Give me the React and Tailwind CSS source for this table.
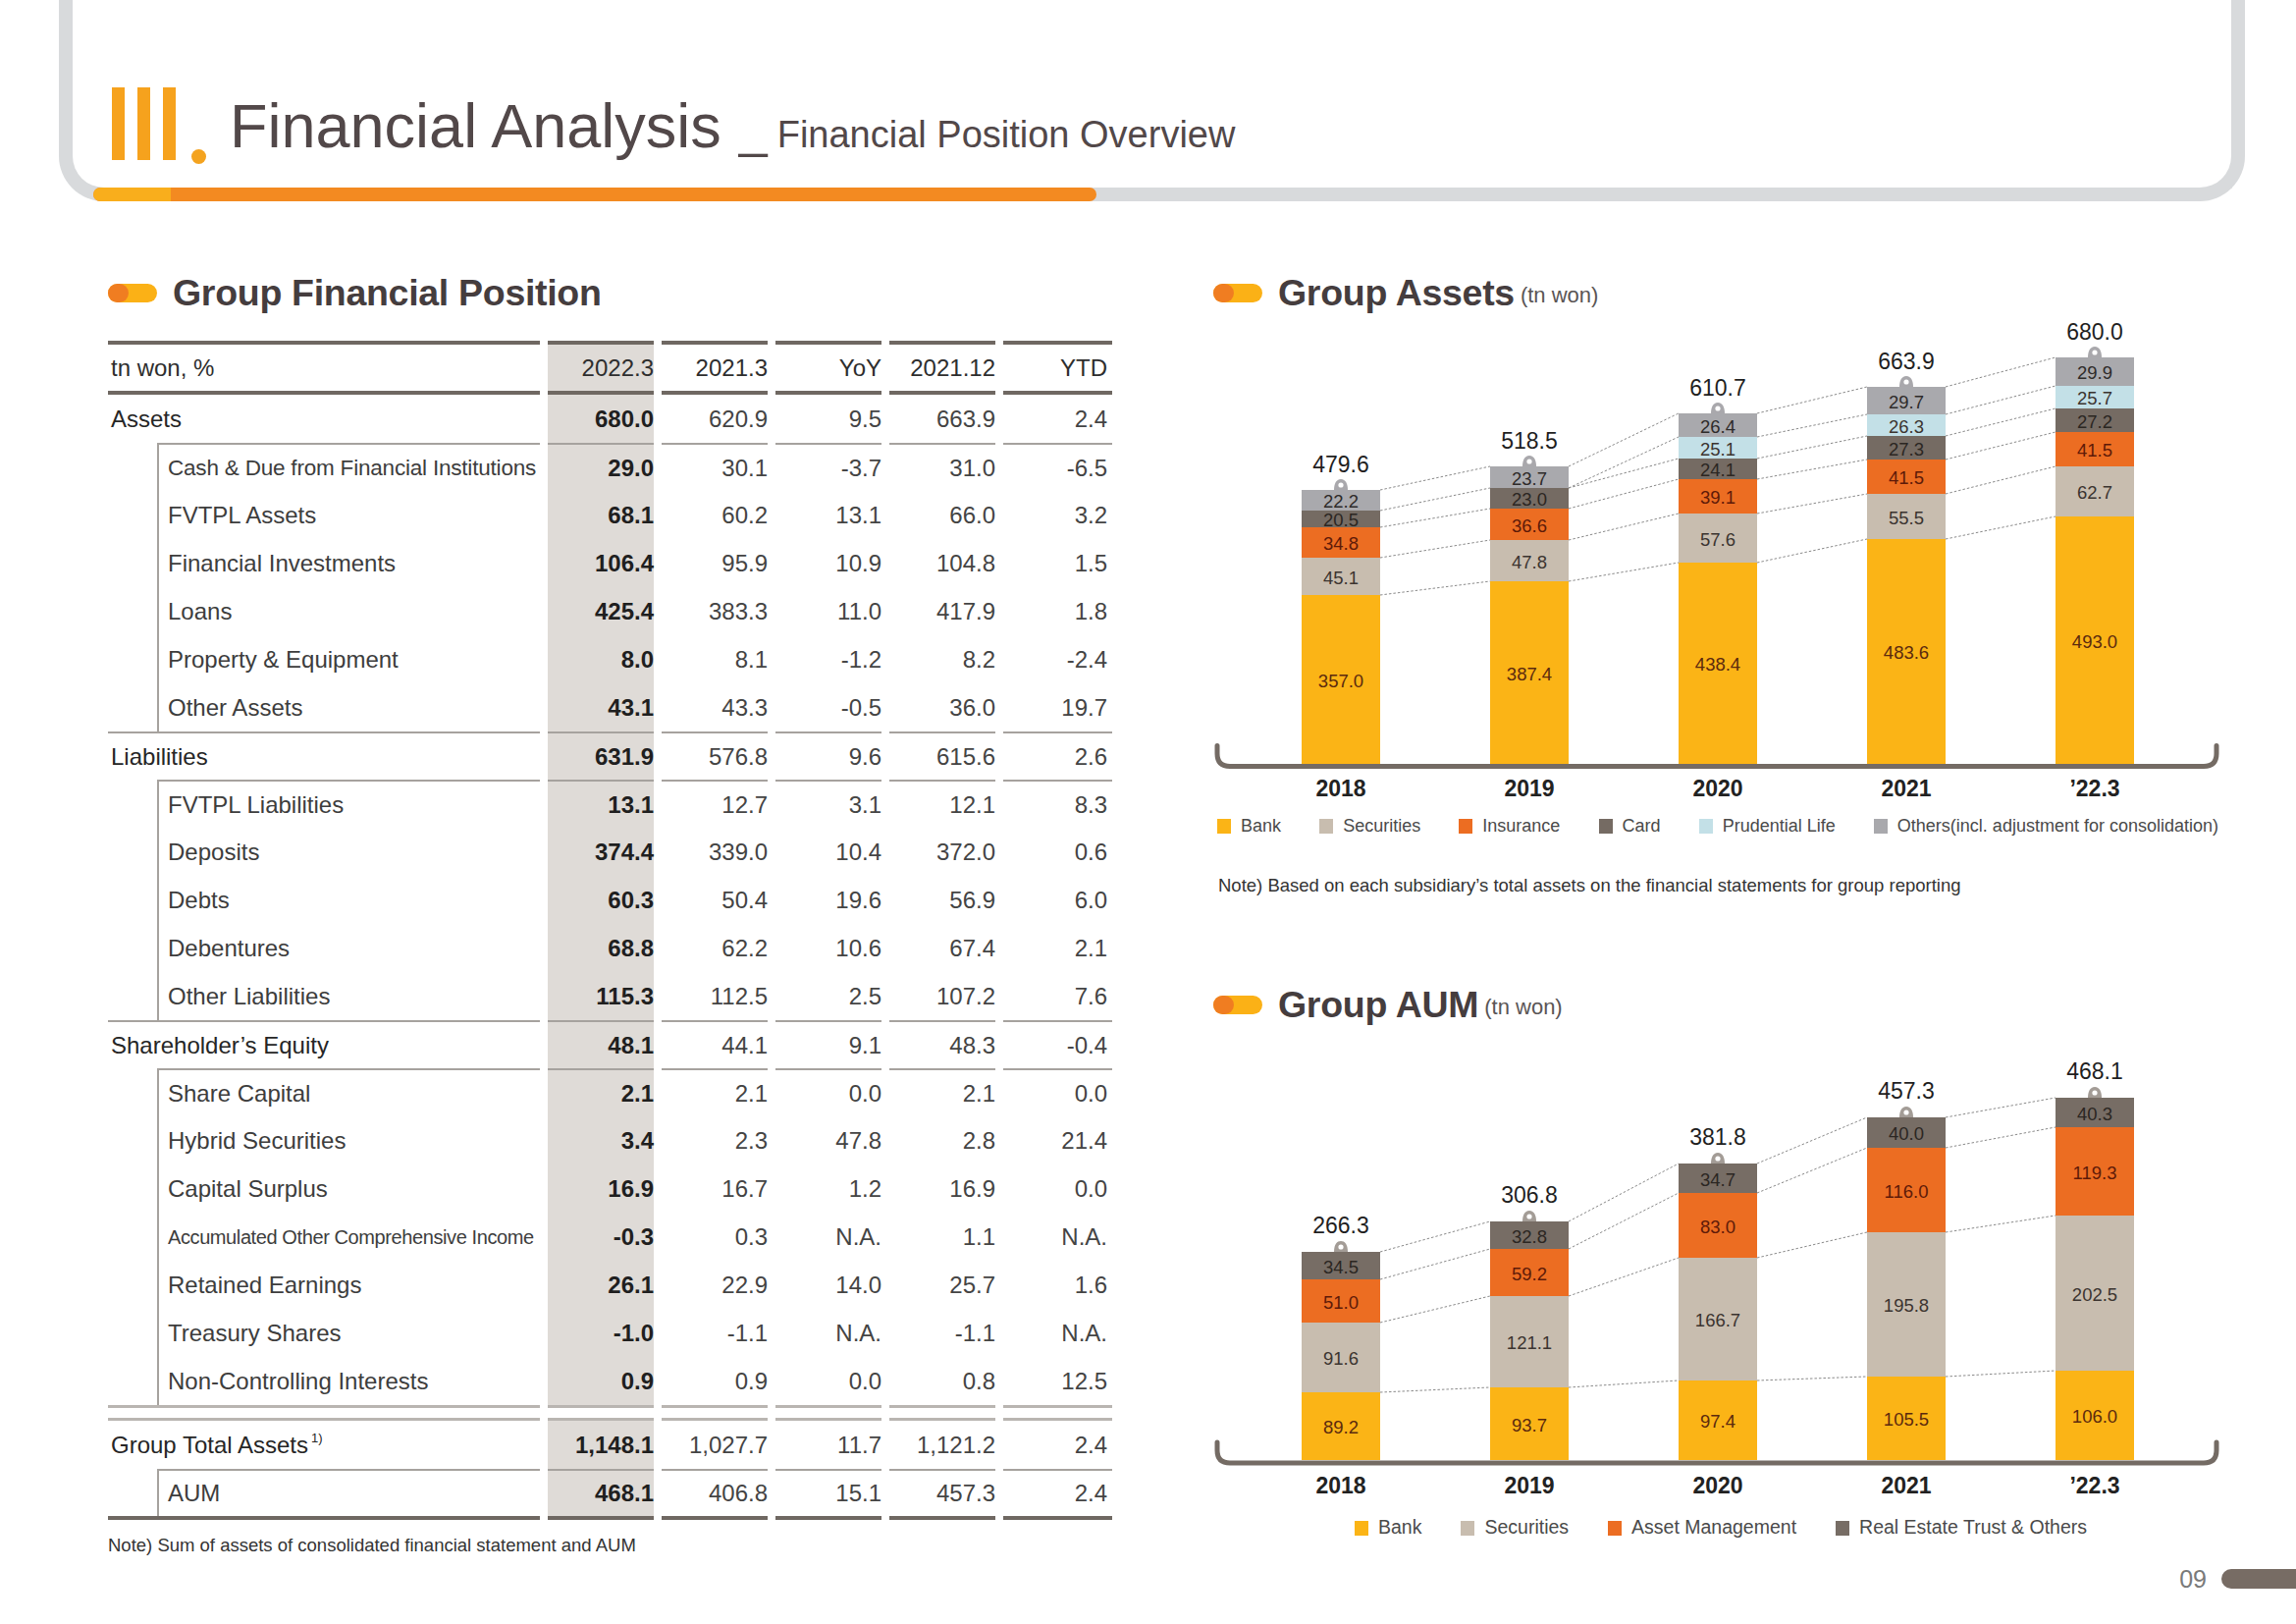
import React from 'react';

// table layout: label column + five value columns, each separated by a white gap
const GRID = 'grid grid-cols-[440px_108px_108px_108px_108px_111px] gap-x-2';
const THIN = 'border-[#a6a29e]';

const TABLE = [
  { label: 'Assets', v: ['680.0', '620.9', '9.5', '663.9', '2.4'], parent: true },
  { label: 'Cash & Due from Financial Institutions', v: ['29.0', '30.1', '-3.7', '31.0', '-6.5'], top: true, size: 'cash' },
  { label: 'FVTPL Assets', v: ['68.1', '60.2', '13.1', '66.0', '3.2'] },
  { label: 'Financial Investments', v: ['106.4', '95.9', '10.9', '104.8', '1.5'] },
  { label: 'Loans', v: ['425.4', '383.3', '11.0', '417.9', '1.8'] },
  { label: 'Property & Equipment', v: ['8.0', '8.1', '-1.2', '8.2', '-2.4'] },
  { label: 'Other Assets', v: ['43.1', '43.3', '-0.5', '36.0', '19.7'] },
  { label: 'Liabilities', v: ['631.9', '576.8', '9.6', '615.6', '2.6'], parent: true, top: true },
  { label: 'FVTPL Liabilities', v: ['13.1', '12.7', '3.1', '12.1', '8.3'], top: true },
  { label: 'Deposits', v: ['374.4', '339.0', '10.4', '372.0', '0.6'] },
  { label: 'Debts', v: ['60.3', '50.4', '19.6', '56.9', '6.0'] },
  { label: 'Debentures', v: ['68.8', '62.2', '10.6', '67.4', '2.1'] },
  { label: 'Other Liabilities', v: ['115.3', '112.5', '2.5', '107.2', '7.6'] },
  { label: 'Shareholder’s Equity', v: ['48.1', '44.1', '9.1', '48.3', '-0.4'], parent: true, top: true },
  { label: 'Share Capital', v: ['2.1', '2.1', '0.0', '2.1', '0.0'], top: true },
  { label: 'Hybrid Securities', v: ['3.4', '2.3', '47.8', '2.8', '21.4'] },
  { label: 'Capital Surplus', v: ['16.9', '16.7', '1.2', '16.9', '0.0'] },
  { label: 'Accumulated Other Comprehensive Income', v: ['-0.3', '0.3', 'N.A.', '1.1', 'N.A.'], size: 'aoci' },
  { label: 'Retained Earnings', v: ['26.1', '22.9', '14.0', '25.7', '1.6'] },
  { label: 'Treasury Shares', v: ['-1.0', '-1.1', 'N.A.', '-1.1', 'N.A.'] },
  { label: 'Non-Controlling Interests', v: ['0.9', '0.9', '0.0', '0.8', '12.5'] },
];

const ValueCells = ({ v, top, h }) =>
  v.map((val, i) => (
    <div
      key={i}
      className={`${h} flex items-center justify-end text-[24px] ${top ? 'border-t-2 ' + THIN : ''} ${
        i === 0 ? 'bg-[#dfdbd7] font-bold text-[#1f1f1f]' : 'text-[#444]'
      } ${i === 4 ? 'pr-[5px]' : ''}`}
    >
      {val}
    </div>
  ));

const Row = ({ row, h = 'h-[49px]' }) => {
  const labelSize =
    row.size === 'cash'
      ? 'text-[22.5px] tracking-[-0.2px]'
      : row.size === 'aoci'
      ? 'text-[20px] tracking-[-0.4px]'
      : 'text-[24px]';
  return (
    <div className={GRID}>
      {row.parent ? (
        <div className={`${h} flex items-center pl-[3px] text-[24px] text-[#262626] ${row.top ? 'border-t-2 ' + THIN : ''}`}>
          {row.label}
          {row.sup && <sup className="text-[13px] ml-[3px]">{row.sup}</sup>}
        </div>
      ) : (
        <div className={h}>
          <div
            className={`ml-[50px] h-full border-l-2 ${THIN} ${row.top ? 'border-t-2' : ''} pl-[9px] flex items-center ${labelSize} text-[#3d3d3d] whitespace-nowrap`}
          >
            {row.label}
          </div>
        </div>
      )}
      <ValueCells v={row.v} top={row.top} h={h} />
    </div>
  );
};

const Pill = () => (
  <div className="flex w-[50px] h-[19px] rounded-full bg-[#fbb116]">
    <div className="w-[21px] h-[19px] rounded-full bg-[#f07d21]" />
  </div>
);

const SectionTitle = ({ title, unit }) => (
  <div className="h-[36px] flex items-center">
    <Pill />
    <span className="ml-[16px] text-[37.5px] font-bold tracking-[-0.3px] text-[#453d3e] leading-[36px]">{title}</span>
    {unit && <span className="ml-[6px] self-end mb-[2px] text-[22px] text-[#5a5555] leading-[26px]">{unit}</span>}
  </div>
);

// ---------- charts ----------
const CX = [1366, 1558, 1750, 1942, 2134];
const HALF = 40;
const SVG_FONT = '"Liberation Sans", Arial, sans-serif';

const ASSET_SERIES = [
  { name: 'Bank', color: '#fbb416', text: '#5b2a0e' },
  { name: 'Securities', color: '#c8bdaf', text: '#3b3430' },
  { name: 'Insurance', color: '#ec6d22', text: '#5e1a08' },
  { name: 'Card', color: '#756b63', text: '#2b2622' },
  { name: 'Prudential Life', color: '#c3e0e7', text: '#3b3430' },
  { name: 'Others(incl. adjustment for consolidation)', color: '#a9a9ad', text: '#2e2b2a' },
];

const ASSET_BARS = [
  { year: '2018', total: '479.6', tops: [606, 568, 537, 520, 520, 499], vals: ['357.0', '45.1', '34.8', '20.5', null, '22.2'] },
  { year: '2019', total: '518.5', tops: [592, 550, 518, 497, 497, 475], vals: ['387.4', '47.8', '36.6', '23.0', null, '23.7'] },
  { year: '2020', total: '610.7', tops: [573, 523, 488, 467, 445, 421], vals: ['438.4', '57.6', '39.1', '24.1', '25.1', '26.4'] },
  { year: '2021', total: '663.9', tops: [549, 503, 468, 444, 422, 394], vals: ['483.6', '55.5', '41.5', '27.3', '26.3', '29.7'] },
  { year: '\u201922.3', total: '680.0', tops: [526, 475, 440, 416, 393, 364], vals: ['493.0', '62.7', '41.5', '27.2', '25.7', '29.9'] },
];

const AUM_SERIES = [
  { name: 'Bank', color: '#fbb416', text: '#5b2a0e' },
  { name: 'Securities', color: '#c8bdaf', text: '#3b3430' },
  { name: 'Asset Management', color: '#ec6d22', text: '#5e1a08' },
  { name: 'Real Estate Trust & Others', color: '#776d65', text: '#2b2622' },
];

const AUM_BARS = [
  { year: '2018', total: '266.3', tops: [1418, 1347, 1303, 1275], vals: ['89.2', '91.6', '51.0', '34.5'] },
  { year: '2019', total: '306.8', tops: [1413, 1320, 1272, 1244], vals: ['93.7', '121.1', '59.2', '32.8'] },
  { year: '2020', total: '381.8', tops: [1406, 1281, 1215, 1185], vals: ['97.4', '166.7', '83.0', '34.7'] },
  { year: '2021', total: '457.3', tops: [1402, 1255, 1169, 1138], vals: ['105.5', '195.8', '116.0', '40.0'] },
  { year: '\u201922.3', total: '468.1', tops: [1396, 1238, 1148, 1118], vals: ['106.0', '202.5', '119.3', '40.3'] },
];

const StackChart = ({ box, series, bars, bottom, axisY, yearY, pinColor, totalGap }) => {
  const [x0, y0, w, h] = box;

  const links = [];
  for (let j = 0; j < bars.length - 1; j++) {
    const a = bars[j];
    const b = bars[j + 1];
    series.forEach((s, k) => {
      if (a.vals[k] == null && b.vals[k] == null) return;
      links.push(
        <line
          key={`${j}-${k}`}
          x1={CX[j] + HALF}
          y1={a.tops[k]}
          x2={CX[j + 1] - HALF}
          y2={b.tops[k]}
          stroke="#8a8a8a"
          strokeWidth="1"
          strokeDasharray="2.5 2"
        />
      );
    });
  }

  return (
    <svg width={w} height={h} viewBox={`${x0} ${y0} ${w} ${h}`} className="block" fontFamily={SVG_FONT}>
      {links}
      {bars.map((bar, j) => {
        const cx = CX[j];
        const top = bar.tops[bar.tops.length - 1];
        return (
          <g key={bar.year}>
            {series.map((s, k) => {
              if (bar.vals[k] == null) return null;
              const y = bar.tops[k];
              const yb = k === 0 ? bottom : bar.tops[k - 1];
              return (
                <g key={k}>
                  <rect x={cx - HALF} y={y} width={HALF * 2} height={yb - y} fill={s.color} />
                  <text x={cx} y={(y + yb) / 2 + 1} fontSize="18.5" textAnchor="middle" dominantBaseline="central" fill={s.text}>
                    {bar.vals[k]}
                  </text>
                </g>
              );
            })}
            <path
              d={`M${cx - 7},${top} C${cx - 7},${top - 6} ${cx - 5},${top - 11} ${cx},${top - 11} C${cx + 5},${top - 11} ${cx + 7},${top - 6} ${cx + 7},${top} Z`}
              fill={pinColor}
            />
            <circle cx={cx} cy={top - 5} r="2.6" fill="#ffffff" />
            <text x={cx} y={top - totalGap} fontSize="23" textAnchor="middle" dominantBaseline="central" fill="#1f1f1f">
              {bar.total}
            </text>
            <text x={cx} y={yearY} fontSize="23" fontWeight="700" textAnchor="middle" dominantBaseline="central" fill="#222">
              {bar.year}
            </text>
          </g>
        );
      })}
      <path
        d={`M1240,${axisY - 21} L1240,${axisY - 13} Q1240,${axisY} 1253,${axisY} L2245,${axisY} Q2258,${axisY} 2258,${axisY - 13} L2258,${axisY - 21}`}
        fill="none"
        stroke="#746b64"
        strokeWidth="5"
        strokeLinecap="round"
      />
    </svg>
  );
};

const Legend = ({ series, className, text }) => (
  <div className={`flex items-center ${className}`}>
    {series.map((s) => (
      <div key={s.name} className="flex items-center gap-[10px]">
        <div className="w-[14px] h-[15px]" style={{ backgroundColor: s.color }} />
        <span className={`${text} text-[#4a4a4a] whitespace-nowrap`}>{s.name}</span>
      </div>
    ))}
  </div>
);

export default function App() {
  return (
    <div className="w-[2339px] h-[1654px] bg-white flex flex-col overflow-hidden font-['Liberation_Sans',Arial,sans-serif]">
      {/* header frame */}
      <div className="relative ml-[60px] w-[2227px] h-[205px] border-x-[14px] border-b-[14px] border-t-0 border-[#d8dadc] rounded-b-[46px]">
        <div className="flex items-end pt-[89px] pl-[40px]">
          <div className="flex gap-[13px] h-[74px]">
            <div className="w-[13px] h-full bg-[#f6a21d]" />
            <div className="w-[13px] h-full bg-[#f6a21d]" />
            <div className="w-[13px] h-full bg-[#f6a21d]" />
          </div>
          <div className="ml-[16px] mb-[-4px] w-[15px] h-[15px] rounded-full bg-[#f4a31f]" />
          <div className="ml-[24px] mb-[3px] flex items-baseline text-[#524849]">
            <span className="text-[63px] leading-[63px]">Financial Analysis</span>
            <span className="ml-[18px] text-[52px] leading-[52px]">_</span>
            <span className="ml-[10px] text-[38px] leading-[38px]">Financial Position Overview</span>
          </div>
        </div>
        <div className="absolute left-[21px] -bottom-[14px] h-[14px] w-[1022px] rounded-full bg-[#f38a21] flex overflow-hidden">
          <div className="w-[79px] h-full bg-[#f9ae1c] rounded-l-full" />
        </div>
      </div>

      {/* content */}
      <div className="mt-[75px] flex pl-[110px]">
        {/* left: table */}
        <div className="w-[1023px] flex flex-col">
          <SectionTitle title="Group Financial Position" />
          <div className="mt-[31px] text-[#2e2e2e]">
            <div className={GRID}>
              <div className="h-[55px] border-y-4 border-[#6f6862] flex items-center pl-[3px] text-[24px]">tn won, %</div>
              {['2022.3', '2021.3', 'YoY', '2021.12', 'YTD'].map((c, i) => (
                <div
                  key={c}
                  className={`h-[55px] border-y-4 border-[#6f6862] flex items-center justify-end text-[24px] ${
                    i === 0 ? 'bg-[#dfdbd7]' : ''
                  } ${i === 4 ? 'pr-[5px]' : ''}`}
                >
                  {c}
                </div>
              ))}
            </div>
            {TABLE.map((r) => (
              <Row key={r.label} row={r} />
            ))}
            <div className={GRID}>
              {[0, 1, 2, 3, 4, 5].map((i) => (
                <div key={i} className="h-[16px] border-y-[3px] border-[#b9b5b1]" />
              ))}
            </div>
            <Row row={{ label: 'Group Total Assets', sup: '1)', v: ['1,148.1', '1,027.7', '11.7', '1,121.2', '2.4'], parent: true }} />
            <Row row={{ label: 'AUM', v: ['468.1', '406.8', '15.1', '457.3', '2.4'], top: true }} h="h-[48px]" />
            <div className={GRID}>
              {[0, 1, 2, 3, 4, 5].map((i) => (
                <div key={i} className="h-[4px] bg-[#6f6862]" />
              ))}
            </div>
          </div>
          <p className="mt-[13px] h-[26px] leading-[26px] text-[18.5px] text-[#333]">
            Note) Sum of assets of consolidated financial statement and AUM
          </p>
        </div>

        {/* right: charts */}
        <div className="ml-[103px] w-[1034px] flex flex-col">
          <SectionTitle title="Group Assets" unit="(tn won)" />
          <StackChart
            box={[1236, 316, 1034, 502]}
            series={ASSET_SERIES}
            bars={ASSET_BARS}
            bottom={778}
            axisY={780.5}
            yearY={803}
            pinColor="#a9a8ac"
            totalGap={26}
          />
          <Legend series={ASSET_SERIES} className="mt-[8px] h-[30px] ml-[4px] w-[1020px] justify-between" text="text-[18px]" />
          <p className="mt-[33px] h-[26px] leading-[26px] ml-[5px] text-[18.5px] text-[#333]">
            Note) Based on each subsidiary’s total assets on the financial statements for group reporting
          </p>
          <div className="mt-[90px]">
            <SectionTitle title="Group AUM" unit="(tn won)" />
          </div>
          <StackChart
            box={[1236, 1041, 1034, 489]}
            series={AUM_SERIES}
            bars={AUM_BARS}
            bottom={1487}
            axisY={1490}
            yearY={1513}
            pinColor="#a39c96"
            totalGap={27}
          />
          <Legend series={AUM_SERIES} className="mt-[11px] h-[30px] w-[1034px] justify-center gap-[40px]" text="text-[19.5px]" />
        </div>
      </div>

      {/* page number */}
      <div className="mt-auto mb-[36px] h-[20px] flex items-center justify-end">
        <span className="mr-[15px] text-[25px] leading-[20px] text-[#7a7a7a]">09</span>
        <div className="w-[76px] h-[20px] rounded-l-full bg-[#776c64]" />
      </div>
    </div>
  );
}
